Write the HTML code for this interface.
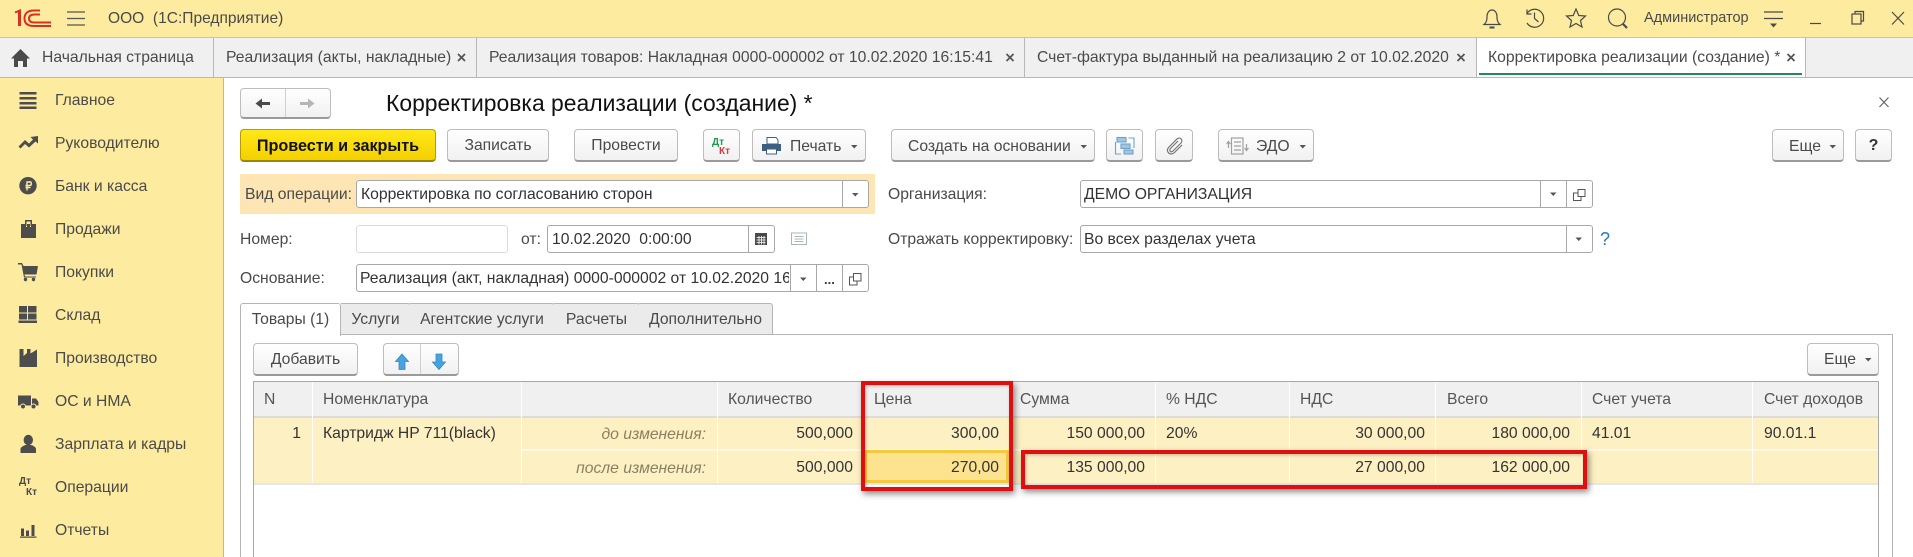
<!DOCTYPE html>
<html lang="ru"><head><meta charset="utf-8"><title>Корректировка реализации</title>
<style>
*{box-sizing:border-box}
html,body{margin:0;padding:0;background:#fff}
body{position:relative;width:1913px;height:557px;overflow:hidden;font-family:"Liberation Sans",Arial,sans-serif;font-size:15.7px;color:#4a4a4a}
.t{position:absolute;white-space:nowrap;line-height:20px;height:20px}
.r{text-align:right}
.b{position:absolute;top:129px;height:33px;border:1px solid #bdbdbd;border-bottom:2px solid #9a9a9a;border-radius:4px;background:linear-gradient(#fff,#f1f1f1)}
.f{position:absolute;height:28px;background:#fff;border:1px solid #a8a8a8;border-radius:3px}
.v{position:absolute;width:1px;background:#a8a8a8}
.a{position:absolute}
.tab{position:absolute;top:303px;height:32px;border:1px solid #b5b5b5;border-left:0;background:#ebebeb;border-radius:0 3px 0 0;text-align:center;line-height:32px;color:#4a4a4a}
.d{color:#333}
.i{font-style:italic;color:#8a8060}
.h{color:#555}
svg{position:absolute;left:0;top:0}
</style></head><body>
<!-- top bar -->
<div class="a" style="left:0;top:0;width:1913px;height:38px;background:#fdeb9f;border-bottom:1px solid #d8c67c"></div>
<div class="a" style="left:0;top:38px;width:1913px;height:40px;background:#f0f0f0;border-bottom:1px solid #b8b8b8"></div>
<div class="a" style="left:1476px;top:38px;width:329px;height:39px;background:#fff"></div>
<div class="a" style="left:213px;top:38px;width:1px;height:39px;background:#b8b8b8"></div>
<div class="a" style="left:476px;top:38px;width:1px;height:39px;background:#b8b8b8"></div>
<div class="a" style="left:1024px;top:38px;width:1px;height:39px;background:#b8b8b8"></div>
<div class="a" style="left:1476px;top:38px;width:1px;height:39px;background:#b8b8b8"></div>
<div class="a" style="left:1805px;top:38px;width:1px;height:39px;background:#b8b8b8"></div>
<div class="a" style="left:1479px;top:73px;width:323px;height:2px;background:#1f8a5f"></div>

<div class="t" style="left:108px;top:9px;font-size:15.55px">ООО&nbsp; (1С:Предприятие)</div>
<div class="t" style="left:1644px;top:8px;font-size:14.5px">Администратор</div>
<div class="t" style="left:42px;top:48px">Начальная страница</div>
<div class="t" style="left:226px;top:48px">Реализация (акты, накладные)</div>
<div class="t" style="left:489px;top:48px">Реализация товаров: Накладная 0000-000002 от 10.02.2020 16:15:41</div>
<div class="t" style="left:1037px;top:48px">Счет-фактура выданный на реализацию 2 от 10.02.2020</div>
<div class="t" style="left:1488px;top:48px">Корректировка реализации (создание) *</div>

<!-- sidebar -->
<div class="a" style="left:0;top:78px;width:224px;height:479px;background:#fdeb9f;border-right:1px solid #cdb96f"></div>
<div class="t" style="left:55px;top:91px">Главное</div>
<div class="t" style="left:55px;top:134px">Руководителю</div>
<div class="t" style="left:55px;top:177px">Банк и касса</div>
<div class="t" style="left:55px;top:220px">Продажи</div>
<div class="t" style="left:55px;top:263px">Покупки</div>
<div class="t" style="left:55px;top:306px">Склад</div>
<div class="t" style="left:55px;top:349px">Производство</div>
<div class="t" style="left:55px;top:392px">ОС и НМА</div>
<div class="t" style="left:55px;top:435px">Зарплата и кадры</div>
<div class="t" style="left:55px;top:478px">Операции</div>
<div class="t" style="left:55px;top:521px">Отчеты</div>
<div class="t" style="left:19px;top:472px;font-size:10px;font-weight:bold;color:#4a4a4a">Дт</div>
<div class="t" style="left:26px;top:483px;font-size:10px;font-weight:bold;color:#4a4a4a">Кт</div>

<!-- header -->
<div class="b" style="left:240px;top:88px;width:91px;height:31px"></div>
<div class="a" style="left:285px;top:89px;width:1px;height:28px;background:#cfcfcf"></div>
<div class="t" style="left:386px;top:91px;font-size:22.9px;line-height:24px;height:24px;color:#111">Корректировка реализации (создание) *</div>

<!-- toolbar -->
<div class="b" style="left:240px;width:196px;background:linear-gradient(#ffe81a,#f4d000);border:1px solid #b59c00;border-bottom:2px solid #9c8600;text-align:center;line-height:32px;font-weight:bold;font-size:16.2px;color:#111">Провести и закрыть</div>
<div class="b" style="left:447px;width:102px;text-align:center;line-height:32px">Записать</div>
<div class="b" style="left:574px;width:104px;text-align:center;line-height:32px">Провести</div>
<div class="b" style="left:703px;width:37px"></div>
<div class="t" style="left:712px;top:133px;font-size:10px;font-weight:bold;color:#1f9a4f">Дт</div>
<div class="t" style="left:719px;top:142px;font-size:10px;font-weight:bold;color:#d83a3a">Кт</div>
<div class="b" style="left:752px;width:114px"></div>
<div class="t" style="left:790px;top:137px">Печать</div>
<div class="b" style="left:891px;width:204px"></div>
<div class="t" style="left:908px;top:137px">Создать на основании</div>
<div class="b" style="left:1106px;width:37px"></div>
<div class="b" style="left:1155px;width:38px"></div>
<div class="b" style="left:1218px;width:96px"></div>
<div class="t" style="left:1256px;top:137px">ЭДО</div>
<div class="b" style="left:1772px;width:72px"></div>
<div class="t" style="left:1789px;top:137px">Еще</div>
<div class="b" style="left:1855px;width:37px;text-align:center;line-height:31px;font-weight:bold;font-size:16px;color:#333">?</div>

<!-- form -->
<div class="a" style="left:240px;top:174px;width:635px;height:40px;background:#fde6b4"></div>
<div class="t" style="left:245px;top:185px">Вид операции:</div>
<div class="f" style="left:356px;top:180px;width:513px"></div>
<div class="v" style="left:842px;top:181px;height:26px"></div>
<div class="t d" style="left:361px;top:185px">Корректировка по согласованию сторон</div>
<div class="t" style="left:240px;top:230px">Номер:</div>
<div class="f" style="left:356px;top:225px;width:152px;border-color:#dcdcdc"></div>
<div class="t" style="left:521px;top:230px">от:</div>
<div class="f" style="left:547px;top:225px;width:228px"></div>
<div class="v" style="left:748px;top:226px;height:26px"></div>
<div class="t d" style="left:552px;top:230px">10.02.2020&nbsp; 0:00:00</div>
<div class="t" style="left:240px;top:269px">Основание:</div>
<div class="f" style="left:356px;top:264px;width:513px"></div>
<div class="t d" style="left:360px;top:269px;width:429px;overflow:hidden">Реализация (акт, накладная) 0000-000002 от 10.02.2020 16:15:41</div>
<div class="v" style="left:790px;top:265px;height:26px"></div>
<div class="v" style="left:816px;top:265px;height:26px"></div>
<div class="v" style="left:842px;top:265px;height:26px"></div>
<div class="t d" style="left:824px;top:270px;font-weight:bold;font-size:13px">...</div>
<div class="t" style="left:888px;top:185px">Организация:</div>
<div class="f" style="left:1080px;top:180px;width:513px"></div>
<div class="v" style="left:1540px;top:181px;height:26px"></div>
<div class="v" style="left:1566px;top:181px;height:26px"></div>
<div class="t d" style="left:1084px;top:185px">ДЕМО ОРГАНИЗАЦИЯ</div>
<div class="t" style="left:888px;top:230px">Отражать корректировку:</div>
<div class="f" style="left:1080px;top:225px;width:513px"></div>
<div class="v" style="left:1566px;top:226px;height:26px"></div>
<div class="t d" style="left:1084px;top:230px">Во всех разделах учета</div>
<div class="t" style="left:1600px;top:229px;font-size:18px;color:#2a7ab0">?</div>

<!-- tabs -->
<div class="a" style="left:240px;top:334px;width:1653px;height:223px;border:1px solid #b5b5b5;border-bottom:0"></div>
<div class="tab" style="left:341px;width:70px">Услуги</div>
<div class="tab" style="left:410px;width:145px">Агентские услуги</div>
<div class="tab" style="left:554px;width:86px">Расчеты</div>
<div class="tab" style="left:639px;width:134px">Дополнительно</div>
<div class="tab" style="left:240px;width:101px;height:33px;background:#fff;border-left:1px solid #b5b5b5;border-bottom:0;border-radius:3px 3px 0 0">Товары (1)</div>

<div class="b" style="left:253px;top:343px;width:105px;text-align:center;line-height:32px">Добавить</div>
<div class="b" style="left:383px;top:343px;width:76px"></div>
<div class="a" style="left:420px;top:344px;width:1px;height:30px;background:#cfcfcf"></div>
<div class="b" style="left:1807px;top:343px;width:72px"></div>
<div class="t" style="left:1824px;top:350px">Еще</div>

<!-- table -->
<div class="a" style="left:253px;top:381px;width:1626px;height:176px;border:1px solid #a8a8a8;border-bottom:0;background:#fff"></div>
<div class="a" style="left:254px;top:382px;width:1624px;height:34px;background:#f0f0f0"></div>
<div class="a" style="left:254px;top:416px;width:1624px;height:2px;background:#dcdcdc"></div>
<div class="a" style="left:254px;top:418px;width:1624px;height:65px;background:#fdf0c3"></div>
<div class="a" style="left:254px;top:483px;width:1624px;height:2px;background:#e6e6e6"></div>
<div class="a" style="left:521px;top:449px;width:1357px;height:2px;background:#fff8e4"></div>
<div class="a" style="left:312px;top:382px;width:1px;height:101px;background:#fff"></div>
<div class="a" style="left:521px;top:382px;width:1px;height:101px;background:#fff"></div>
<div class="a" style="left:717px;top:382px;width:1px;height:101px;background:#fff"></div>
<div class="a" style="left:864px;top:382px;width:1px;height:101px;background:#fff"></div>
<div class="a" style="left:1009px;top:382px;width:1px;height:101px;background:#fff"></div>
<div class="a" style="left:1155px;top:382px;width:1px;height:101px;background:#fff"></div>
<div class="a" style="left:1289px;top:382px;width:1px;height:101px;background:#fff"></div>
<div class="a" style="left:1435px;top:382px;width:1px;height:101px;background:#fff"></div>
<div class="a" style="left:1581px;top:382px;width:1px;height:101px;background:#fff"></div>
<div class="a" style="left:1752px;top:382px;width:1px;height:101px;background:#fff"></div>
<div class="a" style="left:864px;top:450px;width:145px;height:33px;background:#fde38e;border:3px solid #f4c93f"></div>

<div class="t h" style="left:264px;top:390px">N</div>
<div class="t h" style="left:323px;top:390px">Номенклатура</div>
<div class="t h" style="left:728px;top:390px">Количество</div>
<div class="t h" style="left:874px;top:390px">Цена</div>
<div class="t h" style="left:1020px;top:390px">Сумма</div>
<div class="t h" style="left:1166px;top:390px">% НДС</div>
<div class="t h" style="left:1300px;top:390px">НДС</div>
<div class="t h" style="left:1447px;top:390px">Всего</div>
<div class="t h" style="left:1592px;top:390px">Счет учета</div>
<div class="t h" style="left:1764px;top:390px">Счет доходов</div>

<div class="t d r" style="right:1612px;top:424px">1</div>
<div class="t d" style="left:323px;top:424px">Картридж HP 711(black)</div>
<div class="t i r" style="right:1207px;top:425px">до изменения:</div>
<div class="t i r" style="right:1207px;top:459px">после изменения:</div>
<div class="t d r" style="right:1060px;top:424px">500,000</div>
<div class="t d r" style="right:1060px;top:458px">500,000</div>
<div class="t d r" style="right:914px;top:424px">300,00</div>
<div class="t d r" style="right:914px;top:458px">270,00</div>
<div class="t d r" style="right:768px;top:424px">150 000,00</div>
<div class="t d r" style="right:768px;top:458px">135 000,00</div>
<div class="t d" style="left:1166px;top:424px">20%</div>
<div class="t d r" style="right:488px;top:424px">30 000,00</div>
<div class="t d r" style="right:488px;top:458px">27 000,00</div>
<div class="t d r" style="right:343px;top:424px">180 000,00</div>
<div class="t d r" style="right:343px;top:458px">162 000,00</div>
<div class="t d" style="left:1592px;top:424px">41.01</div>
<div class="t d" style="left:1764px;top:424px">90.01.1</div>

<!-- icons -->
<svg width="1913" height="557" viewBox="0 0 1913 557" fill="none">
<!-- 1C logo -->
<g stroke="#d9301f" stroke-width="2" fill="none">
<path d="M15 12.500L20 10.500V26M19 10.500V26"/>
<path d="M40 10.500H34C27 10.500 24.500 14 24.500 18.500C24.500 23 27 26 34 26H51"/>
<path d="M40 14.500H34.500C30.500 14.500 29 16 29 18.500C29 21 30.500 22.500 34.500 22.500H51"/>
</g>
<!-- hamburger -->
<path d="M67 12H85M67 18.500H85M67 25H85" stroke="#555" stroke-width="1.200"/>
<!-- home -->
<path d="M11 58.500L20.500 49L30 58.500H27V67H23V61H18V67H14V58.500Z" fill="#4a4a4a"/>
<!-- top right -->
<g stroke="#4a4a4a" stroke-width="1.200" fill="none">
<path d="M1484 24.500C1487 22 1487 19 1487 16.500C1487 13 1489 10 1492 10C1495 10 1497 13 1497 16.500C1497 19 1497 22 1500 24.500Z"/>
<path d="M1489.500 27.500H1494.500" stroke-width="2"/>
<path d="M1527 13.500A9 9 0 1 1 1527 23M1534.500 12.500V18.500L1538.500 22"/>
<path d="M1527 9.500V14H1531.500"/>
<path d="M1576 9L1578.800 15.500L1585.500 16L1580.500 20.500L1582 27L1576 23.500L1570 27L1571.500 20.500L1566.500 16L1573.200 15.500Z"/>
<circle cx="1617" cy="17.500" r="8.500"/>
<path d="M1623 24L1627 28" stroke-width="2.200"/>
<path d="M1764 12H1783M1764 18.500H1783"/>
<path d="M1810 23.500H1821"/>
<rect x="1852" y="14" width="9" height="10"/>
<path d="M1855 14V11.500H1863.500V21H1861"/>
<path d="M1892 12L1904 24.500M1904 12L1892 24.500"/>
</g>
<path d="M1770 23.500H1777L1773.500 27.500Z" fill="#4a4a4a"/>
<!-- tab close -->
<g stroke="#555" stroke-width="1.800">
<path d="M458 54L465 61M465 54L458 61"/>
<path d="M1006.500 54L1013.500 61M1013.500 54L1006.500 61"/>
<path d="M1457.500 54L1464.500 61M1464.500 54L1457.500 61"/>
<path d="M1787.500 54L1794.500 61M1794.500 54L1787.500 61"/>
</g>
<!-- form close -->
<path d="M1879.500 97.500L1888.500 107M1888.500 97.500L1879.500 107" stroke="#666" stroke-width="1.200"/>
<!-- sidebar icons -->
<g fill="#4d4d4d">
<rect x="19.500" y="92" width="17" height="2.500"/><rect x="19.500" y="97" width="17" height="2.500"/><rect x="19.500" y="102" width="17" height="2.500"/><rect x="19.500" y="106.500" width="17" height="2.500"/>
<path d="M18.500 146.500L25 140L29 143.500L33 139.500L30.500 137L38 136V143.500L35.500 141.500L29 147.500L25 144L20.500 148.500Z"/>
<circle cx="28" cy="185.700" r="8.700"/>
<path d="M25 220H32V226H30.500V221.500H26.500V226H25Z"/>
<path d="M21 224H26V227H27V224H30V227H31V224H36V238H21Z"/>
<path d="M18 263H22L23.500 266H38L36.500 274.500H24.500L25 276.500H36V277.500H24L21.500 264.500H18Z"/>
<circle cx="25.500" cy="279.500" r="1.700"/><circle cx="33.500" cy="279.500" r="1.700"/>
<rect x="19" y="306" width="8" height="6.500"/><rect x="28" y="306" width="8.500" height="6.500"/><rect x="19" y="313.500" width="8" height="6"/><rect x="28" y="313.500" width="8.500" height="6"/><rect x="18.500" y="320.500" width="18.500" height="2.500"/>
<path d="M19.500 349H23.500V356L27 353V349H30.500V353.500L37 349.500V367H19.500Z"/>
<path d="M18 395.500H31V405.500H18ZM32 398.500H36L38.500 402V405.500H32Z"/>
<circle cx="23" cy="406.500" r="2.500" stroke="#fdeb9f"/><circle cx="33.500" cy="406.500" r="2.500" stroke="#fdeb9f"/>
<ellipse cx="28.300" cy="440" rx="4.700" ry="5.200"/>
<path d="M20.500 453V449C20.500 447 24 445.500 25.500 445H31C33 445.500 36 447 36 449V453Z"/>
<path d="M21 528.500H24V536H21ZM26 530.500H29V536H26ZM31.500 525H34.500V536H31.500ZM20 536.500H36.500V537.700H20Z"/>
</g>
<path d="M31 182H27V190.500M25.500 187.500H30.500M25.500 185.500H29.800C31.800 185.500 31.800 181.700 29.800 181.700" stroke="#fdeb9f" stroke-width="1.400"/>
<!-- back / forward -->
<path d="M258 103.500H270" stroke="#4a4a4a" stroke-width="3"/>
<path d="M262 98.500L255.500 103.500L262 108.500Z" fill="#4a4a4a"/>
<path d="M300 103.500H311" stroke="#b5b5b5" stroke-width="3"/>
<path d="M308 98.500L314.500 103.500L308 108.500Z" fill="#b5b5b5"/>
<!-- print -->
<path d="M767 137.500H776L778 140V144H767Z" fill="#fff" stroke="#3f5f80"/>
<path d="M762 144H781V151H777V149H766V151H762Z" fill="#3f5f80"/>
<rect x="766.500" y="149" width="10" height="5" fill="#fff" stroke="#3f5f80"/>
<!-- dropdown triangles -->
<g fill="#555">
<path d="M851 145H857.500L854.250 148.500Z"/>
<path d="M1080.500 145H1087L1083.750 148.500Z"/>
<path d="M1299.500 145H1306L1302.750 148.500Z"/>
<path d="M1829.500 145H1836L1832.750 148.500Z"/>
<path d="M1865 358H1871.500L1868.250 361.500Z"/>
<path d="M852 193H858.500L855.250 196.500Z"/>
<path d="M800 277.500H806.500L803.250 281Z"/>
<path d="M1550 192.500H1556.500L1553.250 196Z"/>
<path d="M1575.500 237.500H1582L1578.750 241Z"/>
</g>
<!-- struct icon -->
<g stroke="#6fa3cb" stroke-width="1.100" fill="#a3c6e0">
<rect x="1117" y="137.500" width="9" height="4.500"/><rect x="1121" y="144" width="9" height="4.500"/><rect x="1124" y="150" width="9" height="4"/>
<path d="M1128.500 138H1134V148M1115.500 142V154H1121" fill="none"/>
</g>
<!-- clip -->
<path d="M1178 141L1170.500 148.500C1168.500 150.500 1171 153 1173 151L1181 143C1183.500 140 1180 136.500 1177 139L1168.500 147.500C1165 151.500 1170.500 156.500 1174.500 152.500L1182 145" stroke="#777" stroke-width="1.200"/>
<!-- EDO icon -->
<g stroke="#a0a0a0" stroke-width="1.200">
<rect x="1231.500" y="138" width="11.500" height="16"/>
<path d="M1234 142H1241M1234 146H1241M1234 150H1241"/>
<path d="M1228.500 148V142M1226.500 144L1228.500 141.500L1230.500 144M1246.500 144V150M1244.500 148L1246.500 150.500L1248.500 148"/>
</g>
<!-- comment -->
<rect x="791.500" y="233" width="15" height="11.500" stroke="#a9b5bd"/>
<path d="M794.500 236.500H803.500M794.500 239H803.500M794.500 241.500H803.500" stroke="#a9b5bd"/>
<!-- calendar -->
<path d="M755 233H767V245H755Z" fill="#4a4a4a"/>
<path d="M756.500 237.500H765.500M756.500 240H765.500M756.500 242.500H765.500M759 236V244.500M761.500 236V244.500M764 236V244.500" stroke="#fff" stroke-width=".8"/>
<!-- copy -->
<g stroke="#555" stroke-width="1">
<path d="M853.500 273.500H861V281H853.500ZM853.500 277H849.500V285H857V281"/>
<path d="M1578 189.500H1585V196.500H1578ZM1578 193H1573.500V200.500H1581V196.500"/>
</g>
<!-- blue arrows -->
<path d="M402 354L408.500 361.500H405V369.500H399V361.500H395.500Z" fill="#46a3df" stroke="#3c86b8" stroke-width=".8"/>
<path d="M439 369.500L445.500 362H442V354H436V362H432.500Z" fill="#46a3df" stroke="#3c86b8" stroke-width=".8"/>
</svg>

<!-- red frames -->
<div class="a" style="left:861px;top:381px;width:152px;height:110px;border:4px solid #e00f0f;box-shadow:2px 3px 6px rgba(0,0,0,.45),inset 1px 1px 3px rgba(0,0,0,.25)"></div>
<div class="a" style="left:1021px;top:450px;width:566px;height:39px;border:4px solid #e00f0f;box-shadow:2px 3px 6px rgba(0,0,0,.45),inset 1px 1px 3px rgba(0,0,0,.25)"></div>
</body></html>
